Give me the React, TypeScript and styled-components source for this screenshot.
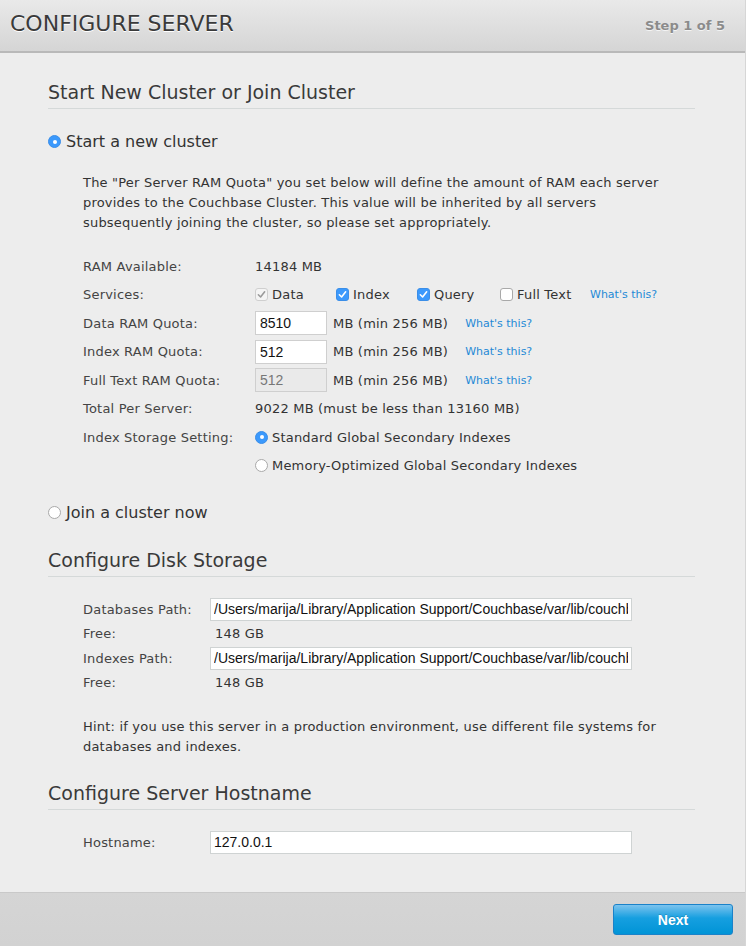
import styled, { createGlobalStyle } from "styled-components";

const GlobalStyle = createGlobalStyle`
  html, body {
    margin: 0;
    padding: 0;
    background: #ffffff;
  }
  body {
    font-family: "DejaVu Sans", Verdana, sans-serif;
    color: #333333;
  }
`;

const Page = styled.div`
  width: 745px;
  height: 946px;
  display: flex;
  flex-direction: column;
  background: #ededed;
  border-right: 1px solid #d6d6d6;
`;

const Header = styled.div`
  height: 51px;
  display: flex;
  align-items: center;
  justify-content: space-between;
  padding: 0 20px 0 10px;
  background: linear-gradient(#e9e9e9, #d5d5d5);
  border-bottom: 2px solid #b9b9b9;
`;

const Title = styled.h1`
  margin: 0 0 5px;
  font-size: 22px;
  font-weight: normal;
  color: #3a3a3a;
  text-shadow: 0 1px 0 #ffffff;
`;

const Step = styled.span`
  font-size: 13px;
  font-weight: bold;
  color: #8b8b8b;
  text-shadow: 0 1px 0 #f4f4f4;
`;

const Content = styled.div`
  flex: 1;
  padding: 28px 50px 0 48px;
`;

const SectionTitle = styled.h2<{ $top?: number }>`
  margin: ${(p) => p.$top ?? 0}px 0 0;
  padding-bottom: 5px;
  font-size: 19px;
  line-height: 22px;
  font-weight: normal;
  color: #3a3a3a;
  border-bottom: 1px solid #d5d9d9;
`;

const BigOption = styled.label<{ $top: number }>`
  display: flex;
  align-items: center;
  gap: 5px;
  font-size: 16px;
  line-height: 19px;
  color: #333;
  margin-top: ${(p) => p.$top}px;
`;

const Indented = styled.div`
  padding-left: 35px;
`;

const Paragraph = styled.p<{ $top: number; $max?: number }>`
  margin: ${(p) => p.$top}px 0 0;
  max-width: ${(p) => (p.$max ? `${p.$max}px` : "none")};
  font-size: 13px;
  letter-spacing: 0.2px;
  line-height: 20px;
  color: #333;
`;

const FormRows = styled.div<{ $label: number; $row: number; $top: number }>`
  display: grid;
  grid-template-columns: ${(p) => p.$label}px 1fr;
  grid-auto-rows: ${(p) => p.$row}px;
  align-items: center;
  margin-top: ${(p) => p.$top}px;
  font-size: 13px;
  letter-spacing: 0.2px;
  color: #333;
`;

const Label = styled.span`
  color: #444;
`;

const Value = styled.div<{ $gap?: number }>`
  display: flex;
  align-items: center;
  gap: ${(p) => p.$gap ?? 6}px;
`;

const Check = styled.label<{ $width: number }>`
  display: flex;
  align-items: center;
  gap: 4px;
  width: ${(p) => p.$width}px;
`;

const Box = styled.span<{ $state: "on" | "off" | "disabled" }>`
  width: 13px;
  height: 13px;
  border-radius: 3px;
  box-sizing: border-box;
  display: inline-flex;
  align-items: center;
  justify-content: center;
  background: ${(p) => (p.$state === "on" ? "#3b99fc" : p.$state === "disabled" ? "#f4f4f4" : "#ffffff")};
  border: 1px solid ${(p) => (p.$state === "on" ? "#3b8ee8" : p.$state === "disabled" ? "#cfcfcf" : "#a9a9a9")};
`;

const Radio = styled.span<{ $on: boolean }>`
  width: 13px;
  height: 13px;
  border-radius: 50%;
  box-sizing: border-box;
  display: inline-flex;
  align-items: center;
  justify-content: center;
  flex-shrink: 0;
  background: ${(p) => (p.$on ? "#3b99fc" : "#ffffff")};
  border: 1px solid ${(p) => (p.$on ? "#3b8ee8" : "#a9a9a9")};
  &::after {
    content: "";
    display: ${(p) => (p.$on ? "block" : "none")};
    width: 4px;
    height: 4px;
    border-radius: 50%;
    background: #ffffff;
  }
`;

const Help = styled.a<{ $left: number }>`
  font-size: 11px;
  letter-spacing: 0;
  color: #1f8ad6;
  text-decoration: none;
  margin-left: ${(p) => p.$left}px;
`;

const NumInput = styled.input`
  width: 72px;
  height: 24px;
  box-sizing: border-box;
  padding: 2px 4px;
  border: 1px solid #cfcfcf;
  background: ${(p) => (p.disabled ? "#eaeaea" : "#ffffff")};
  font-family: "Liberation Sans", Arial, sans-serif;
  font-size: 14px;
  color: ${(p) => (p.disabled ? "#777" : "#111")};
  &:focus {
    outline: none;
  }
`;

const TextInput = styled.input`
  width: 422px;
  height: 23px;
  box-sizing: border-box;
  padding: 2px 3px;
  border: 1px solid #cfd3d3;
  background: #ffffff;
  font-family: "Liberation Sans", Arial, sans-serif;
  font-size: 14px;
  color: #111;
  &:focus {
    outline: none;
  }
`;

const FreeValue = styled.span`
  padding-left: 5px;
`;

const Footer = styled.div`
  height: 53px;
  border-top: 1px solid #c9c9c9;
  background: linear-gradient(#d5d5d5, #d2d2d2);
  display: flex;
  align-items: center;
  justify-content: flex-end;
  padding-right: 12px;
`;

const NextButton = styled.button`
  width: 120px;
  height: 31px;
  border: 1px solid #1a82c9;
  border-radius: 3px;
  background: linear-gradient(#7cc3ee, #169fe0 45%, #0094d6);
  color: #ffffff;
  font-family: "Liberation Sans Narrow", "Liberation Sans", Arial, sans-serif;
  font-size: 14px;
  font-weight: bold;
  cursor: pointer;
  text-shadow: 0 -1px 0 rgba(0, 0, 0, 0.15);
`;

const Tick = ({ color }: { color: string }) => (
  <svg width="9" height="9" viewBox="0 0 8 8">
    <path d="M1.2 4.2 L3.2 6.2 L6.8 1.6" fill="none" stroke={color} strokeWidth="1.4" strokeLinecap="round" strokeLinejoin="round" />
  </svg>
);

const diskPath = "/Users/marija/Library/Application Support/Couchbase/var/lib/couchbase/data";

const App = () => {
  return (
    <Page>
      <GlobalStyle />
      <Header>
        <Title>CONFIGURE SERVER</Title>
        <Step>Step 1 of 5</Step>
      </Header>
      <Content>
        <SectionTitle>Start New Cluster or Join Cluster</SectionTitle>
        <BigOption $top={23}>
          <Radio $on />
          Start a new cluster
        </BigOption>
        <Indented>
          <Paragraph $top={22} $max={595}>
            The "Per Server RAM Quota" you set below will define the amount of RAM each server provides to the
            Couchbase Cluster. This value will be inherited by all servers subsequently joining the cluster, so
            please set appropriately.
          </Paragraph>
          <FormRows $label={172} $row={28.5} $top={19}>
            <Label>RAM Available:</Label>
            <Value>14184 MB</Value>

            <Label>Services:</Label>
            <Value $gap={0}>
              <Check $width={81}>
                <Box $state="disabled">
                  <Tick color="#9a9a9a" />
                </Box>
                Data
              </Check>
              <Check $width={81}>
                <Box $state="on">
                  <Tick color="#ffffff" />
                </Box>
                Index
              </Check>
              <Check $width={83}>
                <Box $state="on">
                  <Tick color="#ffffff" />
                </Box>
                Query
              </Check>
              <Check $width={90}>
                <Box $state="off" />
                Full Text
              </Check>
              <Help $left={0}>What's this?</Help>
            </Value>

            <Label>Data RAM Quota:</Label>
            <Value>
              <NumInput defaultValue="8510" />
              MB (min 256 MB)
              <Help $left={11}>What's this?</Help>
            </Value>

            <Label>Index RAM Quota:</Label>
            <Value>
              <NumInput defaultValue="512" />
              MB (min 256 MB)
              <Help $left={11}>What's this?</Help>
            </Value>

            <Label>Full Text RAM Quota:</Label>
            <Value>
              <NumInput defaultValue="512" disabled />
              MB (min 256 MB)
              <Help $left={11}>What's this?</Help>
            </Value>

            <Label>Total Per Server:</Label>
            <Value>9022 MB (must be less than 13160 MB)</Value>

            <Label>Index Storage Setting:</Label>
            <Value $gap={4}>
              <Radio $on />
              Standard Global Secondary Indexes
            </Value>

            <span />
            <Value $gap={4}>
              <Radio $on={false} />
              Memory-Optimized Global Secondary Indexes
            </Value>
          </FormRows>
        </Indented>
        <BigOption $top={23}>
          <Radio $on={false} />
          Join a cluster now
        </BigOption>

        <SectionTitle $top={27}>Configure Disk Storage</SectionTitle>
        <Indented>
          <FormRows $label={127} $row={24.5} $top={20}>
            <Label>Databases Path:</Label>
            <TextInput defaultValue={diskPath} />
            <Label>Free:</Label>
            <FreeValue>148 GB</FreeValue>
            <Label>Indexes Path:</Label>
            <TextInput defaultValue={diskPath} />
            <Label>Free:</Label>
            <FreeValue>148 GB</FreeValue>
          </FormRows>
          <Paragraph $top={22}>
            Hint: if you use this server in a production environment, use different file systems for databases
            and indexes.
          </Paragraph>
        </Indented>

        <SectionTitle $top={25}>Configure Server Hostname</SectionTitle>
        <Indented>
          <FormRows $label={127} $row={24} $top={20}>
            <Label>Hostname:</Label>
            <TextInput defaultValue="127.0.0.1" />
          </FormRows>
        </Indented>
      </Content>
      <Footer>
        <NextButton>Next</NextButton>
      </Footer>
    </Page>
  );
};

export default App;
